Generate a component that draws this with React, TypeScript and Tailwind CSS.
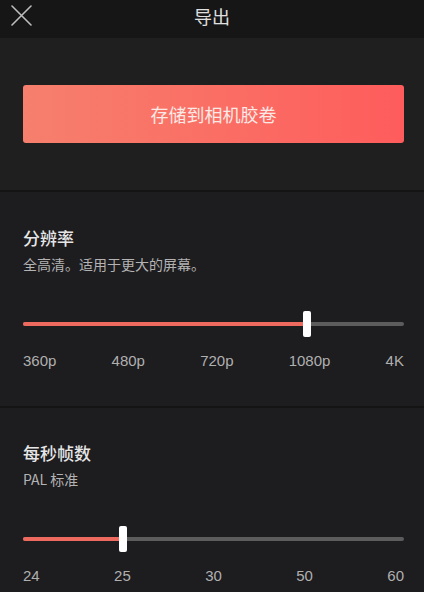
const font = { fontFamily: '"Noto Sans CJK SC", "Noto Sans", sans-serif' };
const latin = { fontFamily: '"Liberation Sans", "Noto Sans CJK SC", sans-serif' };

interface SliderProps {
  title: string;
  subtitle: string;
  labels: string[];
  thumbX: number;
}

function SliderSection({ title, subtitle, labels, thumbX }: SliderProps) {
  return (
    <div className="pl-[23px] pr-[20px]">
      <div className="text-[17px] leading-[24px] font-medium text-[#e6e6e6]">{title}</div>
      <div className="mt-[4px] text-[14px] leading-[20px] text-[#b3b3b3]">{subtitle}</div>
      <div className="relative mt-[37px] h-[26px] flex items-center">
        <div className="w-full h-[4px] rounded-full bg-[#5c5c5c]" />
        <div
          className="absolute left-0 top-[11px] h-[4px] rounded-full bg-[#ef6a5e]"
          style={{ width: thumbX }}
        />
        <div
          className="absolute top-0 h-[26px] w-[8px] rounded-[2px] bg-white"
          style={{ left: thumbX - 4 }}
        />
      </div>
      <div
        className="mt-[14px] flex justify-between text-[15px] leading-[20px] text-[#b0b0b0]"
        style={latin}
      >
        {labels.map((l) => (
          <span key={l}>{l}</span>
        ))}
      </div>
    </div>
  );
}

export default function App() {
  return (
    <div className="w-[424px] h-[592px] overflow-hidden bg-[#1d1c1f]" style={font}>
      <div className="relative h-[38px] bg-[#161616] flex items-center justify-center">
        <svg className="absolute left-[11px] top-[5px]" width="21" height="21" viewBox="0 0 21 21">
          <path d="M1 1 L20 20 M20 1 L1 20" stroke="#bdbdbd" strokeWidth="1.6" strokeLinecap="round" />
        </svg>
        <span className="text-[18px] text-[#e0e0e0] mt-[-6px]">导出</span>
      </div>

      <div className="bg-[#1f1f1f] pl-[23px] pr-[20px] pt-[47px] pb-[47px]">
        <button className="w-full h-[58px] rounded-[3px] bg-gradient-to-r from-[#f67f6d] to-[#fe5c5c] text-[18px] text-[#fbe9e6] flex items-center justify-center">
          存储到相机胶卷
        </button>
      </div>
      <div className="h-[2px] bg-[#141414]" />

      <div className="pt-[34px] pb-[35px]">
        <SliderSection
          title="分辨率"
          subtitle="全高清。适用于更大的屏幕。"
          labels={['360p', '480p', '720p', '1080p', '4K']}
          thumbX={284}
        />
      </div>
      <div className="h-[2px] bg-[#141414]" />

      <div className="pt-[33px]">
        <SliderSection
          title="每秒帧数"
          subtitle="PAL 标准"
          labels={['24', '25', '30', '50', '60']}
          thumbX={100}
        />
      </div>
    </div>
  );
}
